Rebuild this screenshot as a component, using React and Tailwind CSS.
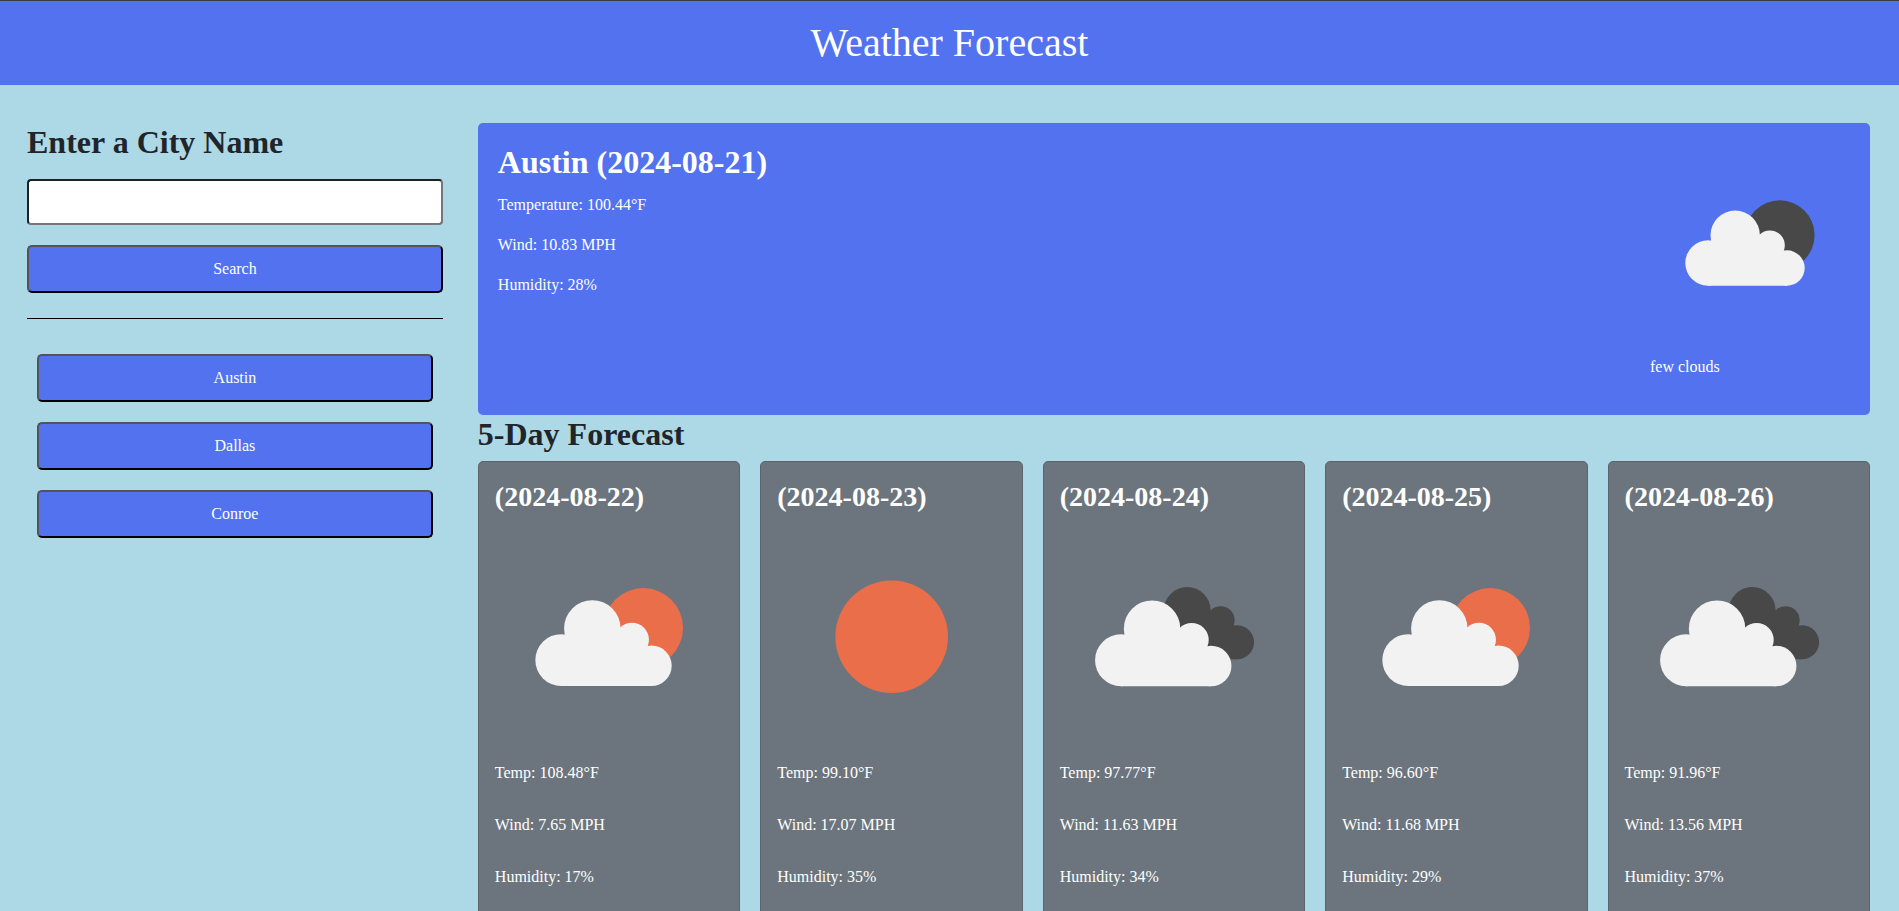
const savedCities = ["Austin", "Dallas", "Conroe"];

const days = [
  { date: "2024-08-22", icon: "fewDay", temp: "108.48", wind: "7.65", humidity: 17 },
  { date: "2024-08-23", icon: "clear", temp: "99.10", wind: "17.07", humidity: 35 },
  { date: "2024-08-24", icon: "broken", temp: "97.77", wind: "11.63", humidity: 34 },
  { date: "2024-08-25", icon: "fewDay", temp: "96.60", wind: "11.68", humidity: 29 },
  { date: "2024-08-26", icon: "broken", temp: "91.96", wind: "13.56", humidity: 37 },
];

function LightCloud({ transform }) {
  return (
    <g fill="#f2f2f2" transform={transform}>
      <circle cx="58" cy="120" r="22.7" />
      <circle cx="85.2" cy="92.3" r="24.7" />
      <circle cx="119.9" cy="102.3" r="14.9" />
      <circle cx="137" cy="125" r="17.7" />
      <path d="M58 142.7V120L70 100L85 92L110 93L120 102L134 108.5L137 125V142.7Z" />
    </g>
  );
}

function DarkCloud() {
  return (
    <g fill="#484849">
      <circle cx="111.4" cy="76.6" r="20.5" />
      <circle cx="140.6" cy="85.1" r="12.3" />
      <circle cx="155" cy="104.4" r="14.9" />
      <path d="M111.4 119.3V76.6L131.8 77L140.6 85L152.3 90L155 104V119.3Z" />
    </g>
  );
}

function WeatherIcon({ name, className }) {
  return (
    <svg viewBox="0 0 200 200" className={className} aria-hidden="true">
      {name === "clear" && <circle cx="100.4" cy="99.6" r="49.3" fill="#eb6e4b" />}
      {name === "fewDay" && <circle cx="129.8" cy="91.8" r="34.8" fill="#eb6e4b" />}
      {name === "fewNight" && <circle cx="129.8" cy="92.1" r="34.8" fill="#484849" />}
      {name === "broken" && <DarkCloud />}
      {name === "broken" && <LightCloud transform="translate(-4.6 0.2)" />}
      {(name === "fewDay" || name === "fewNight") && <LightCloud />}
    </svg>
  );
}

function Button({ children, type = "button" }) {
  return (
    <button
      type={type}
      className="h-12 w-full cursor-pointer rounded-[5px] border-2 border-t-[#545454] border-r-black border-b-black border-l-[#545454] bg-[#5272f0] text-white"
    >
      {children}
    </button>
  );
}

function DayCard({ day }) {
  return (
    <article className="rounded-[5px] border border-[#5d656c] bg-[#6c757d] px-4 pt-[17px] pb-8 text-white">
      <h3 className="mb-2 text-[28px] leading-9 font-bold">({day.date})</h3>
      <WeatherIcon name={day.icon} className="block aspect-square w-full" />
      <div className="mt-[10px] flex flex-col gap-7">
        <p>Temp: {day.temp}°F</p>
        <p>Wind: {day.wind} MPH</p>
        <p>Humidity: {day.humidity}%</p>
      </div>
    </article>
  );
}

export default function App() {
  return (
    <div className="h-screen overflow-y-auto bg-[#add8e6] font-['Liberation_Serif',serif] text-base text-[#212529] [scrollbar-width:none]">
      <header className="border-t border-[#3c3c43] bg-[#5272f0] p-3 text-center text-white">
        <h1 className="text-[40px] leading-[60px]">Weather Forecast</h1>
      </header>

      <div className="grid grid-cols-[23fr_77fr] gap-x-[35px] pt-[38px] pr-[29px] pb-10 pl-[27px]">
        <aside>
          <form onSubmit={(event) => event.preventDefault()}>
            <label htmlFor="city" className="block text-[32px] leading-[38px] font-bold">
              Enter a City Name
            </label>
            <input
              id="city"
              type="text"
              className="mt-[18px] mb-5 block h-[46px] w-full rounded-[4px] border-2 border-t-[#1c2125] border-r-[#767676] border-b-[#767676] border-l-[#1c2125] bg-white px-2"
            />
            <Button type="submit">Search</Button>
          </form>
          <hr className="mt-[25px] mb-[35px] border-black" />
          <div className="flex flex-col gap-5 px-[10px]">
            {savedCities.map((city) => (
              <Button key={city}>{city}</Button>
            ))}
          </div>
        </aside>

        <main className="min-w-0">
          <section className="flex justify-between rounded-[5px] bg-[#5272f0] p-5 text-white">
            <div>
              <h2 className="text-[32px] leading-[38px] font-bold">Austin (2024-08-21)</h2>
              <div className="mt-3 flex flex-col gap-4">
                <p>Temperature: 100.44°F</p>
                <p>Wind: 10.83 MPH</p>
                <p>Humidity: 28%</p>
              </div>
            </div>
            <div className="w-[200px] pb-4">
              <WeatherIcon name="fewNight" className="mb-3 block size-[200px]" />
              <p>few clouds</p>
            </div>
          </section>

          <h2 className="mb-2 text-[32px] leading-[38px] font-bold">5-Day Forecast</h2>
          <div className="grid grid-cols-5 gap-5">
            {days.map((day) => (
              <DayCard key={day.date} day={day} />
            ))}
          </div>
        </main>
      </div>
    </div>
  );
}
